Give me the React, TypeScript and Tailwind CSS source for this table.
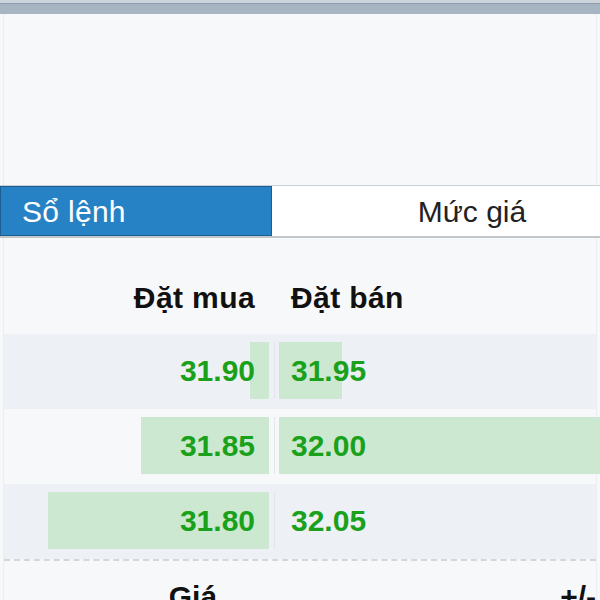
const rows = [
  { bid: "31.90", ask: "31.95", bidBar: 19, askBar: 63, shade: true },
  { bid: "31.85", ask: "32.00", bidBar: 128, askBar: 330, shade: false },
  { bid: "31.80", ask: "32.05", bidBar: 221, askBar: 0, shade: true },
];

export default function App() {
  return (
    <div className="w-[600px] h-[600px] overflow-hidden bg-[#f7f8fa] font-['Liberation_Sans',Arial,sans-serif]">
      {/* top strip */}
      <div className="h-[3px] bg-[#cdd4dc]" />
      <div className="h-[11px] bg-[#a7b4c2] border-t border-[#8f9cab]" />

      <div className="h-[171px] mx-[3px] border-x border-[#eceef1]" />

      {/* tabs */}
      <div className="flex h-[53px] border-t border-[#cbd0d5] border-b-2 border-b-[#c3c7cc]">
        <div className="w-[272px] shrink-0 flex items-center pl-[21px] bg-[#2782c5] border border-[#1d5f92] text-white text-[30px] tracking-[0.3px]">
          Sổ lệnh
        </div>
        <div className="w-[400px] shrink-0 flex items-center justify-center bg-white text-[#222] text-[30px]">
          Mức giá
        </div>
      </div>

      <div className="mx-[3px] border-x border-[#eceef1]">
        {/* header */}
        <div className="h-[96px] flex items-center pt-[23px] text-[30px] font-bold text-[#111] tracking-[0.4px]">
          <div className="w-[265px] text-right pr-[14px]">Đặt mua</div>
          <div className="pl-[22px]">Đặt bán</div>
        </div>

        {rows.map((r) => (
          <div
            key={r.bid}
            className={`flex h-[75px] pt-[8px] pb-[10px] ${r.shade ? "bg-[#edf0f4]" : "bg-[#f7f8fa]"}`}
          >
            <div className="relative w-[265px] flex items-center justify-end pr-[14px]">
              <div className="absolute right-0 top-0 bottom-0 bg-[#cde8d1]" style={{ width: r.bidBar }} />
              <span className="relative text-[30px] font-bold text-[#19a11b]">{r.bid}</span>
            </div>
            <div className="w-[10px] flex justify-center">
              <div className="w-px bg-[#e2e6ea]" />
            </div>
            <div className="relative flex-1 flex items-center pl-[12px]">
              <div className="absolute left-0 top-0 bottom-0 bg-[#cde8d1]" style={{ width: r.askBar }} />
              <span className="relative text-[30px] font-bold text-[#19a11b]">{r.ask}</span>
            </div>
          </div>
        ))}

        <div className="border-t-2 border-dashed border-[#d3d7dc]" />

        <div className="flex h-[60px] pt-[13px] text-[30px] font-bold text-[#111]">
          <div className="w-[219px] text-right">Giá</div>
          <div className="pl-[343px] whitespace-nowrap">+/-</div>
        </div>
      </div>
    </div>
  );
}
